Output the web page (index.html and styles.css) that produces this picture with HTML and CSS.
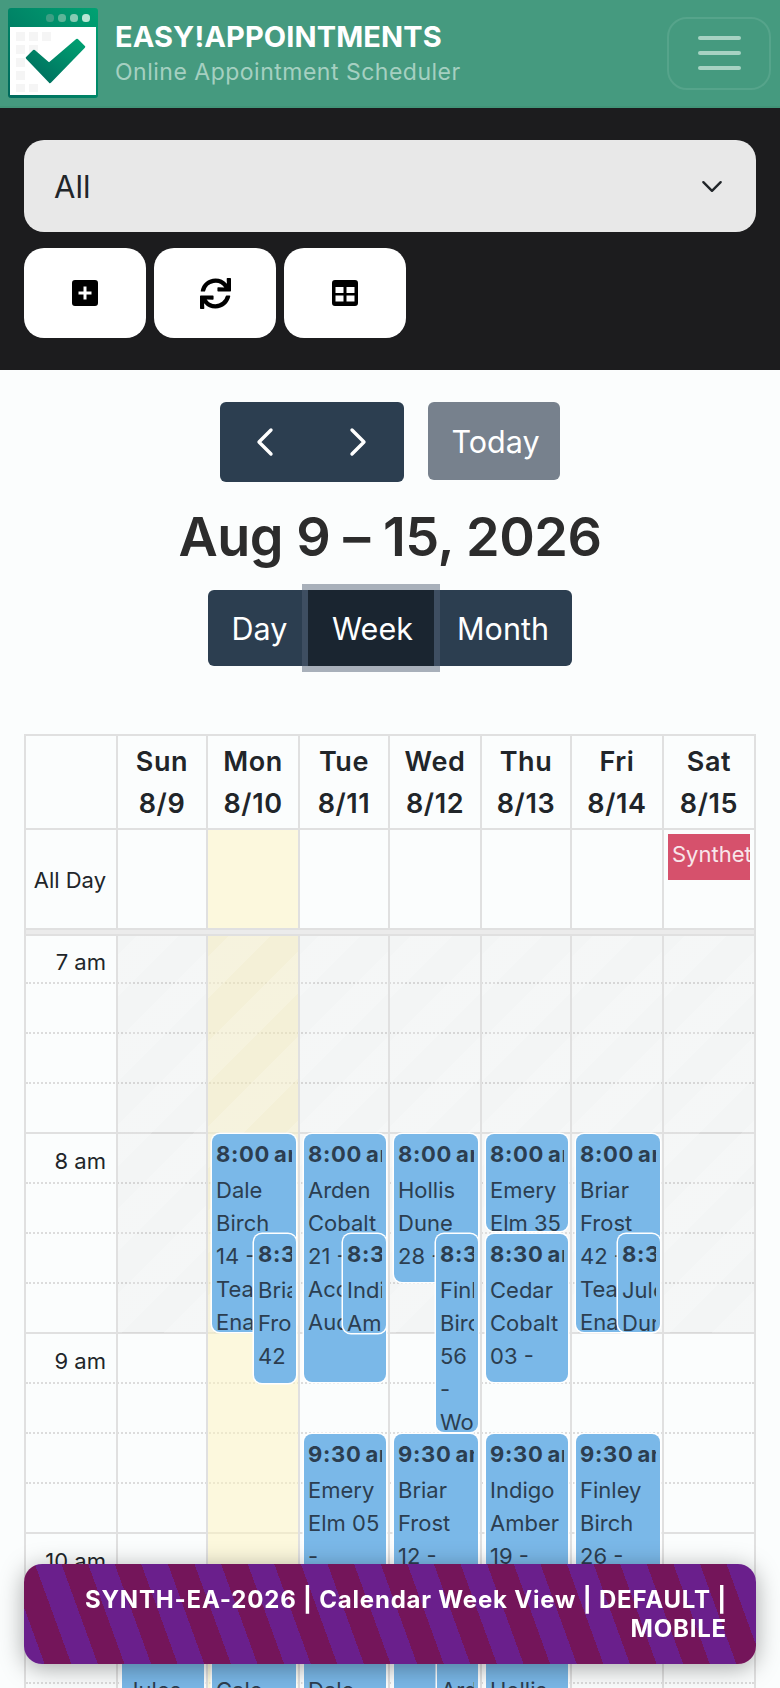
FILE: index.html
```html
<!DOCTYPE html>
<html lang="en">
<head>
    <meta charset="UTF-8">
    <meta name="viewport" content="width=device-width, initial-scale=1.0">
    <title>Easy!Appointments</title>
    <link rel="stylesheet" href="styles.css">
</head>
<body>

<header class="site-header">
    <svg class="logo" viewBox="0 0 90 90">
        <defs>
            <linearGradient id="logo-green" x1="0" y1="1" x2="1" y2="0">
                <stop offset="0" stop-color="#00695c"/>
                <stop offset="1" stop-color="#00a272"/>
            </linearGradient>
        </defs>
        <rect width="90" height="90" rx="3" fill="url(#logo-green)"/>
        <rect x="2" y="19" width="86" height="68" fill="#fff"/>
        <g fill="#f5f5f5">
            <rect x="8" y="24" width="9" height="9"/><rect x="21" y="24" width="9" height="9"/><rect x="34" y="24" width="9" height="9"/>
            <rect x="8" y="37" width="9" height="9"/><rect x="21" y="37" width="9" height="9"/>
            <rect x="8" y="50" width="9" height="9"/>
            <rect x="8" y="63" width="9" height="9"/>
            <rect x="8" y="76" width="9" height="8"/><rect x="21" y="76" width="9" height="8"/>
        </g>
        <rect x="38" y="6" width="8" height="8" rx="3.500" fill="#3d9f84"/>
        <rect x="50" y="6" width="8" height="8" rx="3.500" fill="#5cb598"/>
        <rect x="62" y="6" width="8" height="8" rx="3.500" fill="#85cbb3"/>
        <rect x="74" y="6" width="8" height="8" rx="3.500" fill="#b8e6d4"/>
        <path d="M19 50 L26 43 L41 56 L69 32 L76 39 L42 74 Z" fill="url(#logo-green)" stroke="url(#logo-green)" stroke-width="2.500" stroke-linejoin="round"/>
    </svg>
    <div class="brand">
        <div class="brand-name">EASY!APPOINTMENTS</div>
        <div class="brand-sub">Online Appointment Scheduler</div>
    </div>
    <button class="menu-toggle"><span></span><span></span><span></span></button>
</header>

<section class="toolbar">
    <div class="provider-select">
        <span>All</span>
        <svg class="chevron" viewBox="0 0 20 12"><path d="M2 2l8 8 8-8" fill="none" stroke="#212529" stroke-width="2.200" stroke-linecap="round" stroke-linejoin="round"/></svg>
    </div>
    <div class="tool-buttons">
        <button class="tool-btn">
            <svg class="icon" viewBox="0 0 26 26"><path fill-rule="evenodd" d="M3 0h20a3 3 0 0 1 3 3v20a3 3 0 0 1-3 3H3a3 3 0 0 1-3-3V3a3 3 0 0 1 3-3zM11.500 6.500v5h-5v3h5v5h3v-5h5v-3h-5v-5z"/></svg>
        </button>
        <button class="tool-btn">
            <svg class="icon icon-sync" viewBox="0 0 512 512"><path d="M440.650 12.570l4 82.770A247.160 247.160 0 0 0 255.830 8C134.730 8 33.910 94.920 12.290 209.820A12 12 0 0 0 24.090 224h49.050a12 12 0 0 0 11.670-9.260 175.910 175.910 0 0 1 317-56.940l-101.460-4.860a12 12 0 0 0-12.570 12v47.410a12 12 0 0 0 12 12H500a12 12 0 0 0 12-12V12a12 12 0 0 0-12-12h-47.370a12 12 0 0 0-11.980 12.570zM255.830 432a175.610 175.610 0 0 1-146-77.800l101.800 4.870a12 12 0 0 0 12.570-12v-47.400a12 12 0 0 0-12-12H12a12 12 0 0 0-12 12V500a12 12 0 0 0 12 12h47.350a12 12 0 0 0 12-12.600l-4.150-82.570A247.170 247.170 0 0 0 255.830 504c121.110 0 221.930-86.920 243.550-201.820a12 12 0 0 0-11.800-14.180h-49.050a12 12 0 0 0-11.670 9.260A175.860 175.860 0 0 1 255.830 432z"/></svg>
        </button>
        <button class="tool-btn">
            <svg class="icon" viewBox="0 0 26 26"><path fill-rule="evenodd" d="M3 0h20a3 3 0 0 1 3 3v20a3 3 0 0 1-3 3H3a3 3 0 0 1-3-3V3a3 3 0 0 1 3-3zM3.500 7v6h8V7zM14.500 7v6h8V7zM3.500 15.500v6h8v-6zM14.500 15.500v6h8v-6z"/></svg>
        </button>
    </div>
</section>

<main class="calendar">
    <div class="cal-controls">
        <div class="nav-group">
            <svg class="arrow" viewBox="0 0 18 30"><path d="M15 3L3 15l12 12" fill="none" stroke="#fff" stroke-width="3.400" stroke-linecap="round" stroke-linejoin="round"/></svg>
            <svg class="arrow" viewBox="0 0 18 30"><path d="M3 3l12 12L3 27" fill="none" stroke="#fff" stroke-width="3.400" stroke-linecap="round" stroke-linejoin="round"/></svg>
        </div>
        <button class="today-btn">Today</button>
    </div>
    <h2 class="cal-title">Aug 9 – 15, 2026</h2>
    <div class="view-group">
        <button class="view-btn view-day">Day</button>
        <button class="view-btn view-week">Week</button>
        <button class="view-btn view-month">Month</button>
    </div>

    <div class="cal-table">
        <div class="head-row">
            <div class="head-cell"></div>
            <div class="head-cell">Sun<br>8/9</div>
            <div class="head-cell">Mon<br>8/10</div>
            <div class="head-cell">Tue<br>8/11</div>
            <div class="head-cell">Wed<br>8/12</div>
            <div class="head-cell">Thu<br>8/13</div>
            <div class="head-cell">Fri<br>8/14</div>
            <div class="head-cell">Sat<br>8/15</div>
        </div>
        <div class="allday-row">
            <div class="allday-cell allday-label">All Day</div>
            <div class="allday-cell"></div>
            <div class="allday-cell is-today"></div>
            <div class="allday-cell"></div>
            <div class="allday-cell"></div>
            <div class="allday-cell"></div>
            <div class="allday-cell"></div>
            <div class="allday-cell"><div class="allday-event">Synthetic</div></div>
        </div>
        <div class="allday-divider"></div>

        <div class="time-grid">
            <div class="slot slot-first"><span>7 am</span></div>
            <div class="slot"></div>
            <div class="slot"></div>
            <div class="slot hour-end"></div>
            <div class="slot"><span>8 am</span></div>
            <div class="slot"></div>
            <div class="slot"></div>
            <div class="slot hour-end"></div>
            <div class="slot"><span>9 am</span></div>
            <div class="slot"></div>
            <div class="slot"></div>
            <div class="slot hour-end"></div>
            <div class="slot"><span>10 am</span></div>
            <div class="slot"></div>
            <div class="slot"></div>
            <div class="slot hour-end"></div>

            <div class="day-cols">
                <div class="time-spacer"></div>
                <div class="day-col">
                    <div class="off-hours"></div>
                    <div class="event" style="top:698px;height:198px"><div class="event-inner"><div class="event-time">10:30 am</div>Jules Dune 61 -</div></div>
                </div>
                <div class="day-col is-today">
                    <div class="off-hours"></div>
                    <div class="event" style="top:198px;height:198px"><div class="event-inner"><div class="event-time">8:00 am</div>Dale Birch 14 - Team Enablement</div></div>
                    <div class="event" style="top:298px;height:149px;left:46px"><div class="event-inner"><div class="event-time">8:30 am</div>Briar Frost 42 - Team Enablement</div></div>
                    <div class="event" style="top:698px;height:198px"><div class="event-inner"><div class="event-time">10:30 am</div>Cale Amber 33 -</div></div>
                </div>
                <div class="day-col">
                    <div class="off-hours"></div>
                    <div class="event" style="top:198px;height:248px"><div class="event-inner"><div class="event-time">8:00 am</div>Arden Cobalt 21 - Account Audit</div></div>
                    <div class="event" style="top:298px;height:99px;left:43px"><div class="event-inner"><div class="event-time">8:30 am</div>Indigo Amber 09 -</div></div>
                    <div class="event" style="top:498px;height:198px"><div class="event-inner"><div class="event-time">9:30 am</div>Emery Elm 05 -</div></div>
                    <div class="event" style="top:698px;height:198px"><div class="event-inner"><div class="event-time">10:30 am</div>Dale Birch 47 -</div></div>
                </div>
                <div class="day-col">
                    <div class="off-hours"></div>
                    <div class="event" style="top:198px;height:148px"><div class="event-inner"><div class="event-time">8:00 am</div>Hollis Dune 28 -</div></div>
                    <div class="event" style="top:298px;height:198px;left:46px"><div class="event-inner"><div class="event-time">8:30 am</div>Finley Birch 56 - Work</div></div>
                    <div class="event" style="top:498px;height:398px"><div class="event-inner"><div class="event-time">9:30 am</div>Briar Frost 12 -</div></div>
                    <div class="event" style="top:698px;height:198px;left:47px"><div class="event-inner"><div class="event-time">10:30 am</div>Arden Cobalt 70 -</div></div>
                </div>
                <div class="day-col">
                    <div class="off-hours"></div>
                    <div class="event" style="top:198px;height:97px"><div class="event-inner"><div class="event-time">8:00 am</div>Emery Elm 35 -</div></div>
                    <div class="event" style="top:298px;height:148px"><div class="event-inner"><div class="event-time">8:30 am</div>Cedar Cobalt 03 -</div></div>
                    <div class="event" style="top:498px;height:198px"><div class="event-inner"><div class="event-time">9:30 am</div>Indigo Amber 19 -</div></div>
                    <div class="event" style="top:698px;height:198px"><div class="event-inner"><div class="event-time">10:30 am</div>Hollis Dune 54 -</div></div>
                </div>
                <div class="day-col">
                    <div class="off-hours"></div>
                    <div class="event" style="top:198px;height:198px"><div class="event-inner"><div class="event-time">8:00 am</div>Briar Frost 42 - Team Enablement</div></div>
                    <div class="event" style="top:298px;height:98px;left:46px"><div class="event-inner"><div class="event-time">8:30 am</div>Jules Dune 17 -</div></div>
                    <div class="event" style="top:498px;height:148px"><div class="event-inner"><div class="event-time">9:30 am</div>Finley Birch 26 -</div></div>
                </div>
                <div class="day-col">
                    <div class="off-hours"></div>
                </div>
            </div>
        </div>
    </div>
</main>

<div class="synth-banner">SYNTH-EA-2026 | Calendar Week View | DEFAULT | MOBILE</div>

</body>
</html>
```

FILE: styles.css
```css
* {
    box-sizing: border-box;
}

html, body {
    height: 1688px;
    overflow: hidden;
}

body {
    margin: 0;
    font-family: Inter, "Liberation Sans", sans-serif;
    background-color: #fbfdfd;
    color: #212529;
}

button {
    font-family: inherit;
    border: none;
    padding: 0;
}

/* Top bar */
.site-header {
    height: 108px;
    background-color: #459a7f;
    display: flex;
    align-items: center;
    padding: 0 9px 0 8px;
    border-bottom: 2px solid #429478;
}

.logo {
    width: 90px;
    height: 90px;
    flex-shrink: 0;
}

.brand {
    margin-left: 17px;
    flex: 1;
}

.brand-name {
    font-size: 29px;
    line-height: 38px;
    font-weight: 700;
    color: #fff;
    letter-spacing: 0.1px;
}

.brand-sub {
    font-size: 23px;
    line-height: 33px;
    color: #a5d0c1;
    letter-spacing: 0.5px;
}

.menu-toggle {
    width: 104px;
    height: 73px;
    border: 2px solid #56a48b;
    border-radius: 20px;
    background: transparent;
    display: flex;
    flex-direction: column;
    align-items: center;
    justify-content: center;
    gap: 11px;
}

.menu-toggle span {
    display: block;
    width: 43px;
    height: 4px;
    border-radius: 2px;
    background-color: #a7d2c3;
}

/* Dark filter area */
.toolbar {
    height: 262px;
    background-color: #1c1c1e;
    padding: 32px 24px 0;
}

.provider-select {
    height: 92px;
    border-radius: 20px;
    background-color: #e8e8e8;
    display: flex;
    align-items: center;
    justify-content: space-between;
    padding: 0 33px 0 30px;
    font-size: 31px;
    color: #212529;
}

.chevron {
    width: 22px;
    height: 13px;
}

.tool-buttons {
    display: flex;
    gap: 8px;
    margin-top: 16px;
}

.tool-btn {
    width: 122px;
    height: 90px;
    border-radius: 20px;
    background-color: #fff;
    display: flex;
    align-items: center;
    justify-content: center;
}

.icon {
    width: 26px;
    height: 26px;
    fill: #000;
}

.icon-sync {
    width: 31px;
    height: 31px;
}

/* Calendar controls */
.calendar {
    height: 1318px;
    overflow: hidden;
    padding: 32px 24px 0;
}

.cal-controls {
    display: flex;
    justify-content: center;
    align-items: flex-start;
    gap: 24px;
}

.nav-group {
    width: 184px;
    height: 80px;
    border-radius: 6px;
    background-color: #2c3e50;
    display: flex;
    align-items: center;
    justify-content: space-between;
    padding: 0 37px 0 36px;
}

.arrow {
    width: 18px;
    height: 30px;
}

.today-btn {
    width: 132px;
    height: 78px;
    border-radius: 6px;
    background-color: #77818d;
    color: #fff;
    font-size: 30.500px;
    padding-left: 3px;
}

.cal-title {
    margin: 20px 0 0;
    font-size: 54px;
    line-height: 70px;
    font-weight: 600;
    letter-spacing: -0.5px;
    color: #2c2c2c;
    text-align: center;
}

.view-group {
    display: flex;
    justify-content: center;
    margin-top: 18px;
}

.view-btn {
    height: 76px;
    background-color: #2c3e50;
    color: #fff;
    font-size: 30.500px;
}

.view-day {
    width: 100px;
    padding-left: 3px;
    border-radius: 6px 0 0 6px;
}

.view-week {
    width: 126px;
    padding-left: 3px;
    background-color: #1a2530;
    box-shadow: 0 0 0 6px rgba(82, 96, 116, 0.49);
    position: relative;
}

.view-month {
    width: 138px;
    border-radius: 0 6px 6px 0;
}

/* Calendar table */
.cal-table {
    margin-top: 68px;
    border-top: 2px solid #e0e0e0;
    border-left: 2px solid #e0e0e0;
    border-right: 2px solid #e0e0e0;
}

.head-row,
.allday-row,
.day-cols {
    display: grid;
    grid-template-columns: 90px 90px 92px 90px 92px 90px 92px 92px;
}

.head-row {
    height: 94px;
    border-bottom: 2px solid #e0e0e0;
}

.head-cell {
    border-left: 2px solid #e0e0e0;
    font-size: 27px;
    line-height: 42px;
    font-weight: 600;
    letter-spacing: 0.6px;
    text-align: center;
    padding-top: 5px;
}

.head-cell:first-child {
    border-left: none;
}

.allday-row {
    height: 100px;
    border-bottom: 2px solid #e0e0e0;
}

.allday-cell {
    border-left: 2px solid #e0e0e0;
    padding: 4px;
}

.allday-cell:first-child {
    border-left: none;
}

.allday-label {
    font-size: 22px;
    display: flex;
    align-items: center;
    justify-content: flex-end;
    padding: 2px 10px 0 0;
}

.is-today {
    background-color: rgba(253, 243, 190, 0.5);
}

.allday-event {
    height: 46px;
    background-color: #d6516c;
    color: #f8e6ea;
    font-size: 22px;
    line-height: 40px;
    padding: 0 4px;
    overflow: hidden;
    white-space: nowrap;
}

.allday-divider {
    height: 6px;
    background-color: #ebebeb;
    border-bottom: 2px solid #e0e0e0;
}

.time-grid {
    position: relative;
}

.slot {
    height: 50px;
    border-bottom: 2px dotted #dcdcdc;
    font-size: 22px;
    line-height: 55px;
}

.slot-first {
    height: 48px;
    line-height: 52px;
}

.slot span {
    display: block;
    width: 90px;
    padding-right: 10px;
    text-align: right;
}

.slot.hour-end {
    border-bottom: 2px solid #e0e0e0;
}

.day-cols {
    position: absolute;
    top: 0;
    left: 0;
    bottom: 0;
}

.day-col {
    position: relative;
    border-left: 2px solid #e0e0e0;
}

.off-hours {
    height: 397px;
    background-color: rgba(120, 120, 120, 0.06);
    background-image: repeating-linear-gradient(-45deg, rgba(255, 255, 255, 0.18) 0 30px, transparent 30px 60px);
}

.event {
    position: absolute;
    left: 4px;
    right: 2px;
    background-color: #7ab8e8;
    color: #2c3e50;
    border-radius: 8px;
    box-shadow: 0 0 0 1.500px #fff;
    padding: 4px 4px 0 4px;
    font-size: 22px;
    line-height: 33px;
}

.event-inner {
    height: 100%;
    overflow: hidden;
}

.event-time {
    font-weight: 700;
    white-space: nowrap;
    letter-spacing: 0.7px;
    word-spacing: -2px;
    margin-bottom: 3px;
}

/* Fixed review banner */
.synth-banner {
    position: fixed;
    left: 24px;
    top: 1564px;
    width: 732px;
    height: 100px;
    border-radius: 18px;
    padding: 21px 29px 0 40px;
    text-align: right;
    color: #fff;
    font-size: 24px;
    line-height: 29px;
    font-weight: 700;
    letter-spacing: 0.8px;
    background-image: repeating-linear-gradient(70deg, #6a1f8c 0 19.400px, #74155a 19.400px 44.400px, #6a1f8c 44.400px 50px);
    box-shadow: 0 4px 24px rgba(0, 0, 0, 0.35);
}
```
